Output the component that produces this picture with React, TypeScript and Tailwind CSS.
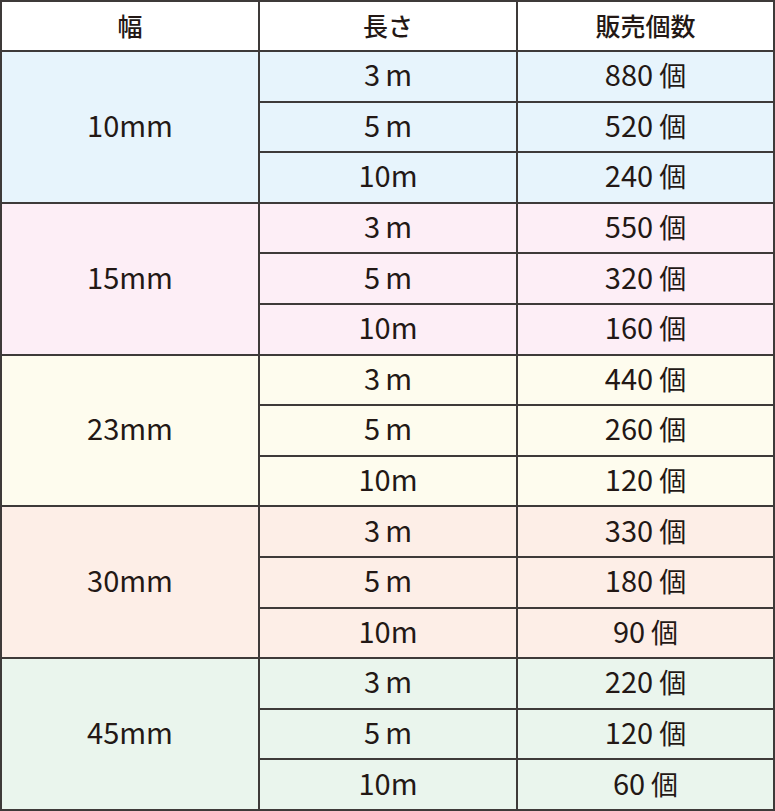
const groups = [
  { width: "10mm", bg: "bg-[#e7f4fc]", rows: [["3", "m", "880"], ["5", "m", "520"], ["10", "m", "240"]] },
  { width: "15mm", bg: "bg-[#fdeef6]", rows: [["3", "m", "550"], ["5", "m", "320"], ["10", "m", "160"]] },
  { width: "23mm", bg: "bg-[#fefcee]", rows: [["3", "m", "440"], ["5", "m", "260"], ["10", "m", "120"]] },
  { width: "30mm", bg: "bg-[#fdeee7]", rows: [["3", "m", "330"], ["5", "m", "180"], ["10", "m", "90"]] },
  { width: "45mm", bg: "bg-[#eaf5ed]", rows: [["3", "m", "220"], ["5", "m", "120"], ["10", "m", "60"]] },
];

const cell = "border-2 border-[#3e3a39] text-center align-middle";

export default function App() {
  return (
    <div
      className="w-[775px] h-[811px] bg-white text-[#231815]"
      style={{ fontFamily: '"Noto Sans CJK JP", "Noto Sans", sans-serif' }}
    >
      <table className="w-[775px] h-[811px] border-collapse table-fixed text-[25px] leading-none">
        <colgroup>
          <col className="w-[258px]" />
          <col className="w-[258px]" />
          <col />
        </colgroup>
        <thead>
          <tr className="h-[50px] bg-white">
            <th className={`${cell} font-medium pb-[2px]`}>幅</th>
            <th className={`${cell} font-medium pb-[2px]`}>長さ</th>
            <th className={`${cell} font-medium pb-[2px]`}>販売個数</th>
          </tr>
        </thead>
        <tbody>
          {groups.map((g) =>
            g.rows.map((r, i) => (
              <tr key={g.width + i} className={`h-[50px] ${g.bg}`}>
                {i === 0 && (
                  <td rowSpan={3} className={`${cell} text-[29px] font-normal pb-[5px]`}>
                    {g.width}
                  </td>
                )}
                <td className={`${cell} text-[29px] font-normal pb-[5px]`}>
                  {r[0]}
                  {r[0].length === 1 && <span className="inline-block w-[5px]" />}
                  {r[1]}
                </td>
                <td className={`${cell} pb-[5px]`}>
                  <span className="text-[29px] font-normal">{r[2]}</span>
                  <span className="inline-block w-[6px]" />
                  <span className="text-[27px]">個</span>
                </td>
              </tr>
            ))
          )}
        </tbody>
      </table>
    </div>
  );
}
